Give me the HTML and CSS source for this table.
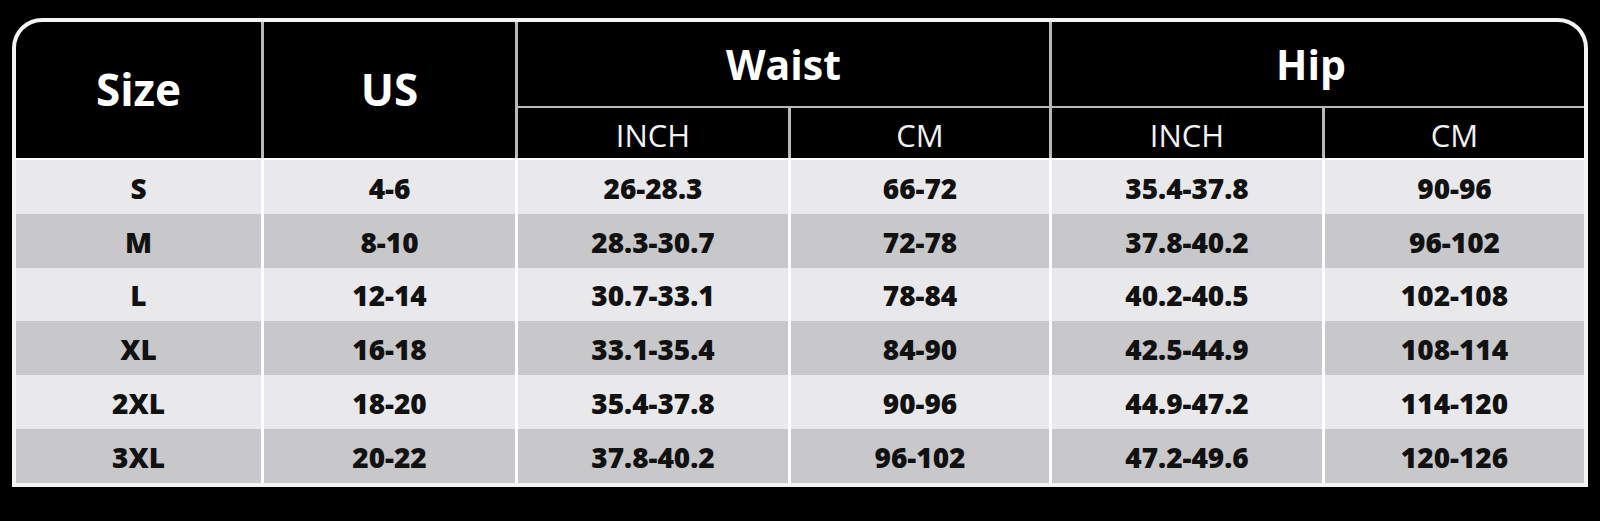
FILE: index.html
```html
<!DOCTYPE html>
<html lang="en">
<head>
<meta charset="utf-8">
<title>Size Chart</title>
<link rel="stylesheet" href="styles.css">
</head>
<body>
<div class="frame">
  <div class="head">
    <div class="hcell big span2">Size</div>
    <div class="hcell big span2">US</div>
    <div class="hcell group c-waist">Waist</div>
    <div class="hcell group c-hip">Hip</div>
    <div class="hcell unit">INCH</div>
    <div class="hcell unit">CM</div>
    <div class="hcell unit">INCH</div>
    <div class="hcell unit">CM</div>
  </div>
  <div class="body">
    <div class="cell odd">S</div><div class="cell odd">4-6</div><div class="cell odd">26-28.3</div><div class="cell odd">66-72</div><div class="cell odd">35.4-37.8</div><div class="cell odd">90-96</div>
    <div class="cell even">M</div><div class="cell even">8-10</div><div class="cell even">28.3-30.7</div><div class="cell even">72-78</div><div class="cell even">37.8-40.2</div><div class="cell even">96-102</div>
    <div class="cell odd">L</div><div class="cell odd">12-14</div><div class="cell odd">30.7-33.1</div><div class="cell odd">78-84</div><div class="cell odd">40.2-40.5</div><div class="cell odd">102-108</div>
    <div class="cell even">XL</div><div class="cell even">16-18</div><div class="cell even">33.1-35.4</div><div class="cell even">84-90</div><div class="cell even">42.5-44.9</div><div class="cell even">108-114</div>
    <div class="cell odd">2XL</div><div class="cell odd">18-20</div><div class="cell odd">35.4-37.8</div><div class="cell odd">90-96</div><div class="cell odd">44.9-47.2</div><div class="cell odd">114-120</div>
    <div class="cell even">3XL</div><div class="cell even">20-22</div><div class="cell even">37.8-40.2</div><div class="cell even">96-102</div><div class="cell even">47.2-49.6</div><div class="cell even">120-126</div>
  </div>
</div>
</body>
</html>
```

FILE: styles.css
```css
html, body {
  margin: 0;
  padding: 0;
  background: #000;
}

body {
  padding: 18px 0 0 12px;
  font-family: "Open Sans", "Noto Sans", "DejaVu Sans", sans-serif;
}

.frame {
  width: 1568px;
  border: 4px solid #f4f4f4;
  border-radius: 30px 30px 0 0;
  overflow: hidden;
  background: #fff;
}

.head {
  display: grid;
  grid-template-columns: 245px 251px 270px 258px 270px 259px;
  grid-template-rows: 84px 50px;
  column-gap: 3px;
  row-gap: 2px;
  background: #b9b9b9;
}

.hcell {
  background: #000;
  color: #fff;
  display: flex;
  align-items: center;
  justify-content: center;
}

.span2 {
  grid-row: 1 / span 2;
}

.big {
  font-size: 44px;
  font-weight: 700;
  padding-bottom: 2px;
}

.group {
  font-size: 41px;
  font-weight: 700;
}

.c-waist {
  grid-column: 3 / span 2;
}

.c-hip {
  grid-column: 5 / span 2;
  padding-right: 14px;
}

.unit {
  font-size: 31px;
  font-weight: 400;
  color: #f2f2f2;
  padding-top: 3px;
}

.body {
  margin-top: 2px;
  display: grid;
  grid-template-columns: 245px 251px 270px 258px 270px 259px;
  grid-auto-rows: 53.8px;
  column-gap: 3px;
  background: #fff;
}

.cell {
  display: flex;
  align-items: center;
  justify-content: center;
  font-size: 28px;
  font-weight: 800;
  color: #111;
  padding-top: 2px;
}

.odd {
  background: #e9e9eb;
}

.even {
  background: #c8c8cb;
}
```
